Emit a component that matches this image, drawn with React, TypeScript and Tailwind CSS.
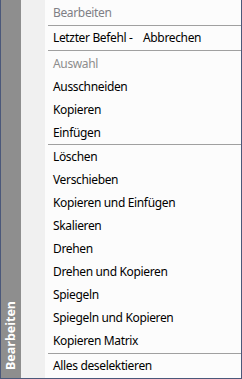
const groupA = ["Auswahl", "Ausschneiden", "Kopieren", "Einfügen"];
const groupB = [
  "Löschen",
  "Verschieben",
  "Kopieren und Einfügen",
  "Skalieren",
  "Drehen",
  "Drehen und Kopieren",
  "Spiegeln",
  "Spiegeln und Kopieren",
  "Kopieren Matrix",
];

function Separator() {
  return <div className="h-px ml-[3px] bg-[#a0a0a0]" />;
}

function Item({ label, disabled }: { label: string; disabled?: boolean }) {
  return (
    <div
      className={`h-[23px] flex items-center pl-[8px] ${
        disabled ? "text-[#8d8d8d]" : "text-black"
      }`}
    >
      {label}
    </div>
  );
}

export default function App() {
  return (
    <div
      className="w-[242px] h-[379px] flex border-l border-r border-b border-[#4b587a] text-[12px] leading-none tracking-[-0.35px]"
      style={{ fontFamily: '"Noto Sans", "Open Sans", sans-serif' }}
    >
      {/* Side caption */}
      <div className="w-[20px] bg-[#8e8e8e] flex flex-col justify-end items-center pb-[8px]">
        <span className="[writing-mode:vertical-rl] rotate-180 text-white font-bold text-[12.5px] tracking-normal">
          Bearbeiten
        </span>
      </div>

      {/* Icon column */}
      <div className="w-[24px] bg-[#f0f0f0]" />

      {/* Menu */}
      <div className="flex-1 flex flex-col bg-[#fcfcfc]">
        <div className="h-[25px] flex items-center pl-[8px] text-[#7f7f86]">Bearbeiten</div>
        <Separator />
        <div className="h-[24px] flex items-center pl-[8px]">
          <span className="w-[90px]">Letzter Befehl -</span>
          <span>Abbrechen</span>
        </div>
        <Separator />
        <div className="pt-px">
          {groupA.map((l, i) => (
            <Item key={l} label={l} disabled={i === 0} />
          ))}
        </div>
        <Separator />
        <div className="pb-px">
          {groupB.map((l) => (
            <Item key={l} label={l} />
          ))}
        </div>
        <Separator />
        <div className="h-[24px] flex items-center pl-[8px]">Alles deselektieren</div>
      </div>
    </div>
  );
}
